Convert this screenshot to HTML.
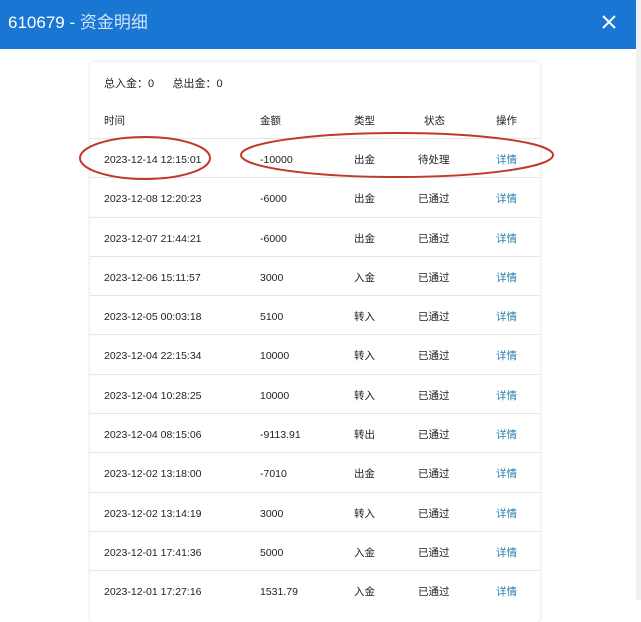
<!DOCTYPE html><html><head><meta charset="utf-8"><style>
body{margin:0;width:641px;height:600px;overflow:hidden;background:#fff;font-family:"Liberation Sans","Noto Sans CJK SC",sans-serif;position:relative}
.hd{position:absolute;left:0;top:0;width:636px;height:49px;background:#1976d2;color:#fff;font-size:17px}
.hd .t{position:absolute;left:8px;top:13px;line-height:20px}
.hd .t span{color:#cfe2f7}
.sb{position:absolute;left:636px;top:0;width:5px;height:600px;background:#f1f1f1}
.card{position:absolute;left:90px;top:62px;width:450px;height:560px;background:#fff;box-shadow:0 0 3px rgba(0,0,0,.15);border-radius:3px}
.sum{position:absolute;left:14px;top:16px;font-size:11px;color:#222;line-height:12px}
.row{position:absolute;left:0;width:450px;height:39px;font-size:10.5px;color:#222;border-top:1px solid #e6e6e6}
.row div{position:absolute;top:15px;line-height:12px;height:12px}
.c1{left:14px}.c2{left:170px}.c3{left:264px}.c4{left:328px}.c5{left:406px;color:#2c7fb0}
.h{border-top:none}
</style></head><body>
<div class="hd"><div class="t">610679 - <span>资金明细</span></div>
<svg style="position:absolute;left:602px;top:15px" width="14" height="14"><path d="M1 1L13 13M13 1L1 13" stroke="#fff" stroke-width="2"/></svg></div>
<div class="sb"></div>
<div class="card">
<div class="sum">总入金：0 &nbsp;&nbsp;&nbsp;&nbsp; 总出金：0</div>
<div class="row h" style="top:38px"><div class="c1">时间</div><div class="c2">金额</div><div class="c3">类型</div><div class="c4" style="left:334px">状态</div><div class="c5" style="color:#222">操作</div></div>
<div class="row" style="top:76px"><div class="c1">2023-12-14 12:15:01</div><div class="c2">-10000</div><div class="c3">出金</div><div class="c4">待处理</div><div class="c5">详情</div></div>
<div class="row" style="top:115px"><div class="c1">2023-12-08 12:20:23</div><div class="c2">-6000</div><div class="c3">出金</div><div class="c4">已通过</div><div class="c5">详情</div></div>
<div class="row" style="top:155px"><div class="c1">2023-12-07 21:44:21</div><div class="c2">-6000</div><div class="c3">出金</div><div class="c4">已通过</div><div class="c5">详情</div></div>
<div class="row" style="top:194px"><div class="c1">2023-12-06 15:11:57</div><div class="c2">3000</div><div class="c3">入金</div><div class="c4">已通过</div><div class="c5">详情</div></div>
<div class="row" style="top:233px"><div class="c1">2023-12-05 00:03:18</div><div class="c2">5100</div><div class="c3">转入</div><div class="c4">已通过</div><div class="c5">详情</div></div>
<div class="row" style="top:272px"><div class="c1">2023-12-04 22:15:34</div><div class="c2">10000</div><div class="c3">转入</div><div class="c4">已通过</div><div class="c5">详情</div></div>
<div class="row" style="top:312px"><div class="c1">2023-12-04 10:28:25</div><div class="c2">10000</div><div class="c3">转入</div><div class="c4">已通过</div><div class="c5">详情</div></div>
<div class="row" style="top:351px"><div class="c1">2023-12-04 08:15:06</div><div class="c2">-9113.91</div><div class="c3">转出</div><div class="c4">已通过</div><div class="c5">详情</div></div>
<div class="row" style="top:390px"><div class="c1">2023-12-02 13:18:00</div><div class="c2">-7010</div><div class="c3">出金</div><div class="c4">已通过</div><div class="c5">详情</div></div>
<div class="row" style="top:430px"><div class="c1">2023-12-02 13:14:19</div><div class="c2">3000</div><div class="c3">转入</div><div class="c4">已通过</div><div class="c5">详情</div></div>
<div class="row" style="top:469px"><div class="c1">2023-12-01 17:41:36</div><div class="c2">5000</div><div class="c3">入金</div><div class="c4">已通过</div><div class="c5">详情</div></div>
<div class="row" style="top:508px"><div class="c1">2023-12-01 17:27:16</div><div class="c2">1531.79</div><div class="c3">入金</div><div class="c4">已通过</div><div class="c5">详情</div></div>
</div>
<svg style="position:absolute;left:0;top:0" width="641" height="600"><ellipse cx="145" cy="158" rx="65" ry="21" fill="none" stroke="#c0392b" stroke-width="2"/><ellipse cx="397" cy="155" rx="156" ry="22" fill="none" stroke="#c0392b" stroke-width="2"/></svg>
</body></html>
